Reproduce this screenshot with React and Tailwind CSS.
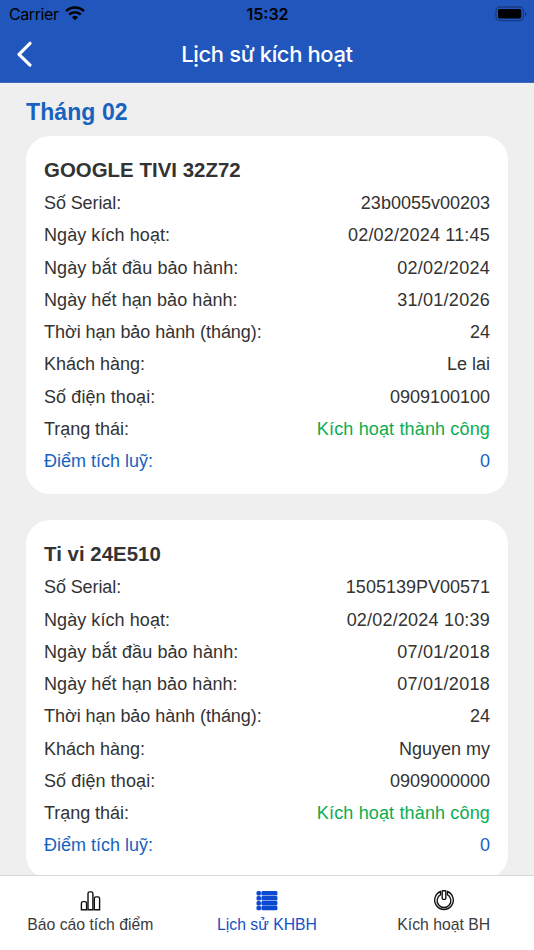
import React from 'react';
import clsx from 'clsx';

const activations = [
  {
    name: 'GOOGLE TIVI 32Z72',
    serial: '23b0055v00203',
    activatedAt: '02/02/2024 11:45',
    start: '02/02/2024',
    end: '31/01/2026',
    months: '24',
    customer: 'Le lai',
    phone: '0909100100',
    status: 'Kích hoạt thành công',
    points: '0',
  },
  {
    name: 'Ti vi 24E510',
    serial: '1505139PV00571',
    activatedAt: '02/02/2024 10:39',
    start: '07/01/2018',
    end: '07/01/2018',
    months: '24',
    customer: 'Nguyen my',
    phone: '0909000000',
    status: 'Kích hoạt thành công',
    points: '0',
  },
];

const WifiIcon = () => (
  <svg width="20" height="15" viewBox="0 0 20 15" fill="none" stroke="#000">
    <path d="M1.1 5.1C6.1 0.3 13.9 0.3 18.9 5.1" strokeWidth="2.7" />
    <path d="M4.2 8.5C7.5 5.5 12.5 5.5 15.8 8.5" strokeWidth="2.5" />
    <path d="M10 14.2L6.9 11.1C8.7 9.5 11.3 9.5 13.1 11.1Z" fill="#000" stroke="none" />
  </svg>
);

const BatteryIcon = () => (
  <svg width="33" height="16" viewBox="0 0 33 16">
    <rect x="1" y="1" width="27.5" height="13.6" rx="4" fill="none" stroke="#183c83" strokeWidth="1.3" />
    <rect x="3" y="3" width="23.3" height="9.6" rx="1.8" fill="#000" />
    <path d="M30 5.4C32 6.2 32 9.4 30 10.2Z" fill="#183c83" />
  </svg>
);

const ChartIcon = () => (
  <svg width="22" height="22" viewBox="0 0 22 22" fill="none" stroke="#111" strokeWidth="1.4">
    <path d="M2.4 19.8V13.3Q2.4 11.6 4.1 11.6H5.9Q7.6 11.6 7.6 13.3V19.8Z" />
    <path d="M9 19.8V3.6Q9 1.9 10.7 1.9H12.2Q13.9 1.9 13.9 3.6V19.8Z" />
    <path d="M15.3 19.8V8.6Q15.3 6.9 17 6.9H18.9Q20.6 6.9 20.6 8.6V19.8Z" />
  </svg>
);

const ListIcon = () => (
  <svg width="22" height="22" viewBox="0 0 22 22" fill="#0b49d2">
    {[1.1, 6, 10.9, 15.8].map((y) => (
      <g key={y}>
        <rect x="0.5" y={y} width="4.5" height="4.5" rx="1.5" />
        <rect x="5.4" y={y} width="16" height="4.5" rx="1.3" />
      </g>
    ))}
  </svg>
);

const PowerIcon = () => (
  <svg width="22" height="22" viewBox="0 0 22 22" fill="none" stroke="#111" strokeWidth="1.35">
    <path d="M7.6 1.5A9.3 9.3 0 1 0 14.4 1.5V4.6A6.9 6.9 0 1 1 7.6 4.6Z" />
    <rect x="9.2" y="0.7" width="3.6" height="8.6" rx="0.8" fill="#fff" />
  </svg>
);

const Row = ({ label, value, labelClass, valueClass }) => (
  <div className="flex h-[32.25px] items-center justify-between text-lg whitespace-nowrap">
    <span className={labelClass}>{label}</span>
    <span className={valueClass}>{value}</span>
  </div>
);

const ActivationCard = ({ item }) => (
  <div className="shrink-0 rounded-[24px] bg-white px-[18px] pt-[18px] pb-[17px]">
    <h2 className="flex h-[33px] items-center text-[20.4px] leading-[31px] font-bold tracking-[0.04px]">{item.name}</h2>
    <Row label="Số Serial:" value={item.serial} labelClass="tracking-[-0.1px]" />
    <Row label="Ngày kích hoạt:" value={item.activatedAt} labelClass="tracking-[0.07px]" valueClass="tracking-[0.2px]" />
    <Row label="Ngày bắt đầu bảo hành:" value={item.start} labelClass="tracking-[0.1px]" valueClass="tracking-[0.27px]" />
    <Row label="Ngày hết hạn bảo hành:" value={item.end} labelClass="tracking-[0.07px]" valueClass="tracking-[0.27px]" />
    <Row label="Thời hạn bảo hành (tháng):" value={item.months} labelClass="tracking-[-0.05px]" />
    <Row label="Khách hàng:" value={item.customer} />
    <Row label="Số điện thoại:" value={item.phone} labelClass="tracking-[0.09px]" />
    <Row label="Trạng thái:" value={item.status} labelClass="tracking-[-0.05px]" valueClass="tracking-[0.15px] text-[#0aad50]" />
    <Row label="Điểm tích luỹ:" value={item.points} labelClass="text-[#1763bf]" valueClass="text-[#1763bf]" />
  </div>
);

const Tab = ({ icon, label, active }) => (
  <button className={clsx('flex flex-1 flex-col items-center pt-[14px] text-[15.75px] whitespace-nowrap', active ? 'text-[#1450c8]' : 'text-[#3b3b3b]')}>
    {icon}
    <span className="mt-[1px] leading-6">{label}</span>
  </button>
);

const App = () => {
  return (
    <div className="flex h-screen w-full flex-col overflow-hidden bg-[#efefef] font-['Liberation_Sans',Arial,sans-serif] text-[#333]">
      <header className="h-[83px] shrink-0 border-b border-[#3d68bd] bg-[#2156bd] font-[Inter,sans-serif]">
        <div className="grid h-[27px] grid-cols-3 items-center pr-[6px] pl-[9px] text-black">
          <div className="flex items-center gap-[6px] text-base tracking-[-0.4px]">
            <span>Carrier</span>
            <WifiIcon />
          </div>
          <span className="pr-[2px] text-center text-base font-semibold">15:32</span>
          <div className="flex justify-end">
            <BatteryIcon />
          </div>
        </div>
        <div className="grid h-[54px] grid-cols-[60px_1fr_60px] items-center">
          <button className="pl-4">
            <svg width="18" height="26" viewBox="0 0 18 26" fill="none" stroke="#fff" strokeWidth="3.2" strokeLinecap="round" strokeLinejoin="round">
              <path d="M14 2.3L3 13.3L14 24.1" />
            </svg>
          </button>
          <h1 className="text-center text-[22px] font-medium tracking-[-0.37px] text-white">Lịch sử kích hoạt</h1>
        </div>
      </header>

      <main className="flex min-h-0 flex-1 flex-col overflow-hidden px-[26px]">
        <div className="flex h-[53px] shrink-0 items-center pt-[6px] text-[23px] font-bold tracking-[0.1px] text-[#1763bf]">Tháng 02</div>
        <div className="flex flex-col gap-[26px]">
          {activations.map((item) => (
            <ActivationCard key={item.serial} item={item} />
          ))}
        </div>
      </main>

      <nav className="flex h-[75px] shrink-0 items-start border-t border-[#d8d8d8] bg-white px-[2px]">
        <Tab icon={<ChartIcon />} label="Báo cáo tích điểm" />
        <Tab icon={<ListIcon />} label="Lịch sử KHBH" active />
        <Tab icon={<PowerIcon />} label="Kích hoạt BH" />
      </nav>
    </div>
  );
};

export default App;
